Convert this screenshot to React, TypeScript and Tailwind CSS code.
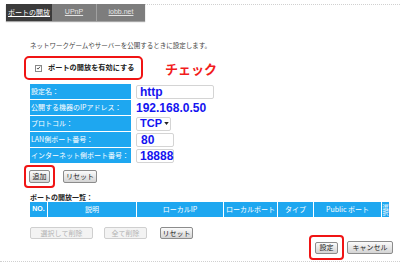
import React from "react";

const Btn = ({
  children,
  className = "",
  disabled = false,
}: {
  children: React.ReactNode;
  className?: string;
  disabled?: boolean;
}) => (
  <span
    className={`flex items-center justify-center rounded-[2px] border text-[7px] leading-none ${
      disabled
        ? "border-[#cfcfcf] bg-[#f3f3f3] text-[#b4b4b4]"
        : "border-[#8c8c8c] bg-linear-to-b from-[#fbfbfb] to-[#d4d4d4] text-[#222]"
    } ${className}`}
  >
    {children}
  </span>
);

const Row = ({ label, children }: { label: string; children: React.ReactNode }) => (
  <div className="flex h-[15px] items-center">
    <span className="flex h-full w-[101px] items-center bg-[#1ea7f0] pl-[1px] text-[7px] text-white">
      {label}
    </span>
    <div className="ml-[5px] flex items-center">{children}</div>
  </div>
);

const Field = ({ children, className = "" }: { children: React.ReactNode; className?: string }) => (
  <span
    className={`flex h-[14px] items-center rounded-[2px] border border-[#d4d4d4] px-[3px] font-['Liberation_Sans',sans-serif] text-[12px] font-bold leading-none text-[#1414f0] ${className}`}
  >
    {children}
  </span>
);

export default function App() {
  return (
    <div className="h-[267px] w-[400px] overflow-hidden bg-white font-['Noto_Sans_CJK_JP',sans-serif] text-[#333]">
      {/* tabs */}
      <div className="flex pl-[6px] pt-[4px]">
        <div className="flex h-[17px] shadow-[0_1px_1px_rgba(0,0,0,0.35)]">
          <span className="flex w-[46px] items-center justify-center bg-[#3b3b3b] text-[7px] text-white underline">
            ポートの開放
          </span>
          <span className="flex w-[45px] items-center justify-center border-r border-[#a0a0a0] bg-[#7d7d7d] font-['Liberation_Sans',sans-serif] text-[7px] text-[#e4e4e4] underline">
            UPnP
          </span>
          <span className="flex w-[48px] items-center justify-center bg-[#7d7d7d] font-['Liberation_Sans',sans-serif] text-[7px] text-[#e4e4e4] underline">
            iobb.net
          </span>
        </div>
        <div className="flex-1 border-t border-dotted border-[#d0d0d0]" />
      </div>

      <p className="mt-[19px] pl-[30px] text-[6.5px] leading-[10px] text-[#444]">
        ネットワークゲームやサーバーを公開するときに設定します。
      </p>

      {/* enable checkbox */}
      <div className="mt-[6px] flex items-center">
        <div className="ml-[24px] flex h-[24px] w-[119px] items-center rounded-[5px] border-[2.5px] border-[#f01414] pl-[9px]">
          <span className="flex h-[7px] w-[7px] items-center justify-center border border-[#888] bg-white">
            <svg viewBox="0 0 8 8" className="h-[6px] w-[6px]">
              <path d="M1.5 4 L3.2 5.8 L6.6 1.8" fill="none" stroke="#333" strokeWidth="1.3" />
            </svg>
          </span>
          <span className="ml-[6px] text-[7.2px] font-bold leading-none text-[#222]">
            ポートの開放を有効にする
          </span>
        </div>
        <span className="ml-[22px] text-[13px] font-bold leading-none text-[#f21c1c]">チェック</span>
      </div>

      {/* form */}
      <div className="ml-[30px] mt-[4px] flex flex-col gap-[1px]">
        <Row label="設定名：">
          <Field className="w-[78px]">http</Field>
        </Row>
        <Row label="公開する機器のIPアドレス：">
          <span className="font-['Liberation_Sans',sans-serif] text-[12px] font-bold leading-none text-[#1414f0]">
            192.168.0.50
          </span>
        </Row>
        <Row label="プロトコル：">
          <Field className="w-[35px] gap-[2px] px-[1px]">
            <span className="text-[11px]">TCP</span>
            <svg viewBox="0 0 6 4" className="ml-auto mr-[1px] h-[3px] w-[5px] shrink-0">
              <path d="M0 0 L6 0 L3 4 Z" fill="#222" />
            </svg>
          </Field>
        </Row>
        <Row label="LAN側ポート番号：">
          <Field className="w-[38px] px-[4px]">80</Field>
        </Row>
        <Row label="インターネット側ポート番号：">
          <Field className="w-[38px] px-[1px]">18888</Field>
        </Row>
      </div>

      {/* add / reset */}
      <div className="mt-[2px] flex items-center">
        <div className="ml-[24px] flex h-[23px] w-[31px] items-center justify-center rounded-[4px] border-[2.5px] border-[#f01414]">
          <Btn className="h-[13px] w-[21px] border-[#5a7898]">追加</Btn>
        </div>
        <Btn className="ml-[8px] h-[13px] w-[34px]">リセット</Btn>
      </div>

      <p className="mt-[5px] pl-[30px] text-[7px] font-bold leading-[9px] text-[#222]">ポートの開放一覧：</p>

      {/* list header */}
      <div className="ml-[30px] flex h-[15px] gap-[1px] text-[7px] text-white">
        <span className="flex w-[17px] items-center justify-center bg-[#1ea7f0] font-['Liberation_Sans',sans-serif] font-bold">
          NO.
        </span>
        <span className="flex w-[88px] items-center justify-center bg-[#1ea7f0]">説明</span>
        <span className="flex w-[86px] items-center justify-center bg-[#1ea7f0]">ローカルIP</span>
        <span className="flex w-[53px] items-center justify-center bg-[#1ea7f0]">ローカルポート</span>
        <span className="flex w-[35px] items-center justify-center bg-[#1ea7f0]">タイプ</span>
        <span className="flex w-[67px] items-center justify-center bg-[#1ea7f0]">Public ポート</span>
        <span className="flex w-[7px] items-center justify-center overflow-hidden bg-[#1ea7f0] text-[6px] leading-[7px] [writing-mode:vertical-rl]">
          選択
        </span>
      </div>

      {/* list buttons */}
      <div className="ml-[30px] mt-[10px] flex items-center">
        <Btn disabled className="h-[12px] w-[63px]">選択して削除</Btn>
        <Btn disabled className="ml-[11px] h-[12px] w-[43px]">全て削除</Btn>
        <Btn className="ml-[13px] h-[12px] w-[33px]">リセット</Btn>
      </div>

      {/* apply / cancel */}
      <div className="-mt-[4px] flex items-center justify-end pr-[7px]">
        <div className="flex h-[25px] w-[35px] items-center justify-center rounded-[4px] border-[2.5px] border-[#f01414]">
          <Btn className="h-[12px] w-[23px]">設定</Btn>
        </div>
        <Btn className="ml-[3px] h-[13px] w-[46px]">キャンセル</Btn>
      </div>

      <div className="mt-[1px] border-t border-dotted border-[#d0d0d0]" />
    </div>
  );
}
